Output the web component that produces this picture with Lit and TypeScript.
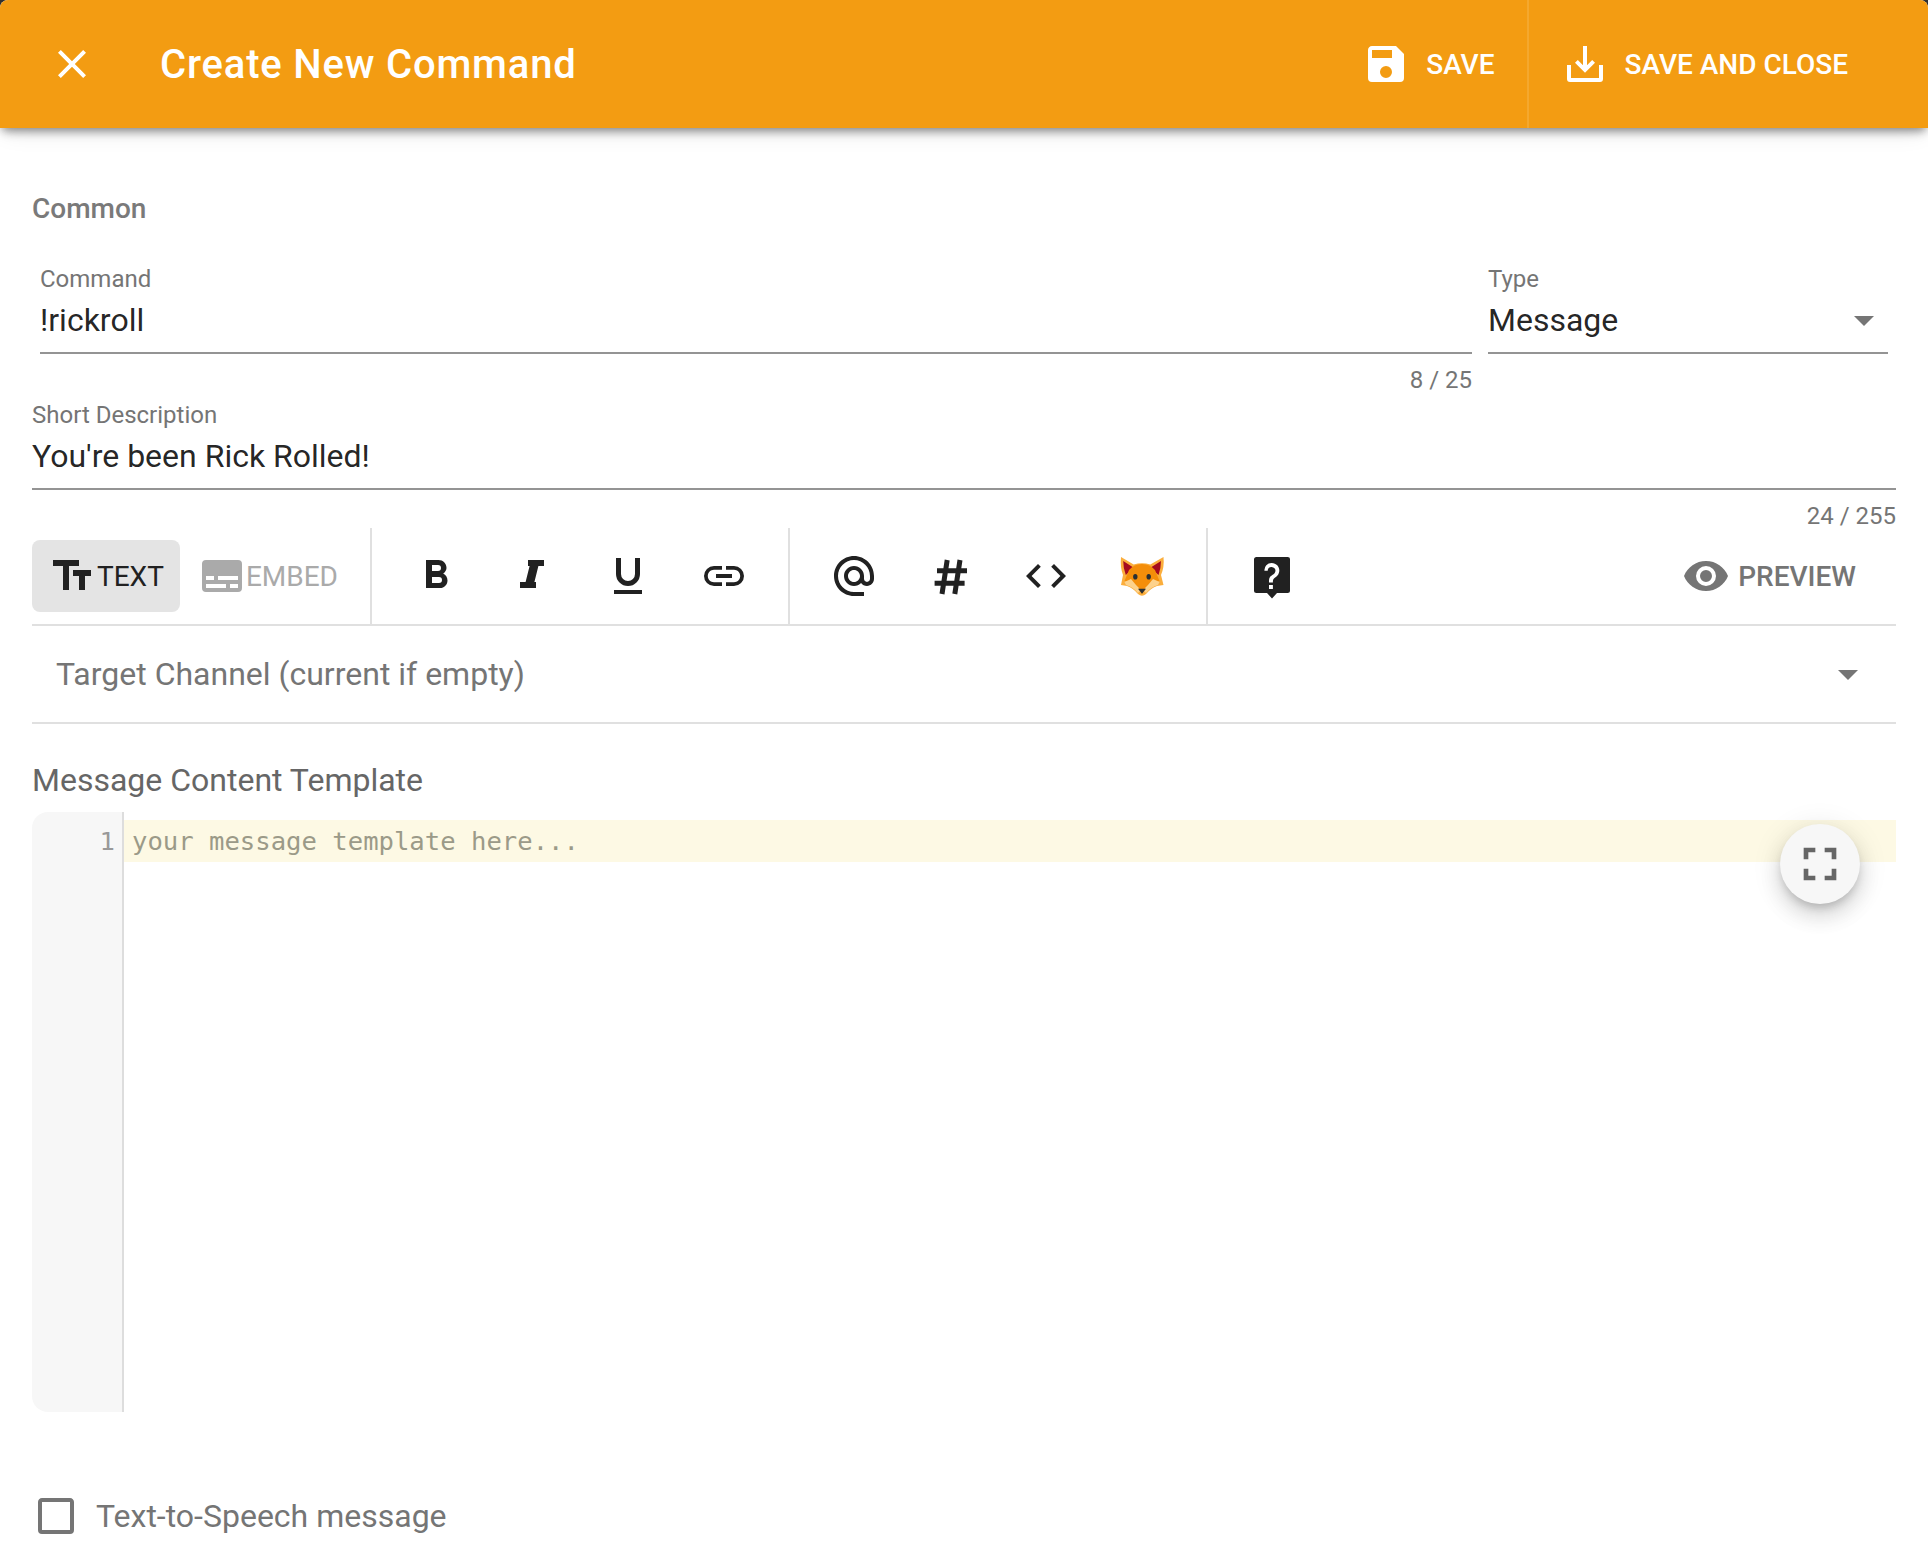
import { LitElement, html, css, svg } from "lit";
import { customElement } from "lit/decorators.js";

const icons = {
  close: "M19,6.41L17.59,5L12,10.59L6.41,5L5,6.41L10.59,12L5,17.59L6.41,19L12,13.41L17.59,19L19,17.59L13.41,12L19,6.41Z",
  save: "M15,9H5V5H15M12,19A3,3 0 0,1 9,16A3,3 0 0,1 12,13A3,3 0 0,1 15,16A3,3 0 0,1 12,19M17,3H5C3.89,3 3,3.9 3,5V19A2,2 0 0,0 5,21H19A2,2 0 0,0 21,19V7L17,3Z",
  tray: "M3 12.5H5V19H19V12.5H21V19.5A1.5 1.5 0 0 1 19.5 21H4.5A1.5 1.5 0 0 1 3 19.5ZM11 3H13V12.6L15.6 10L17 11.4L12 16.4L7 11.4L8.4 10L11 12.6Z",
  size: "M21,12H18V19H15V12H12V9H21M15,4V7H10V19H7V7H2V4H15Z",
  subtitles: "M20,4H4A2,2 0 0,0 2,6V18A2,2 0 0,0 4,20H20A2,2 0 0,0 22,18V6A2,2 0 0,0 20,4M4,12H8V14H4V12M14,18H4V16H14V18M20,18H16V16H20V18M20,14H10V12H20V14Z",
  bold: "M13.5,15.5H10V12.5H13.5A1.5,1.5 0 0,1 15,14A1.5,1.5 0 0,1 13.5,15.5M10,6.5H13A1.5,1.5 0 0,1 14.5,8A1.5,1.5 0 0,1 13,9.5H10M15.6,10.79C16.57,10.11 17.25,9 17.25,8C17.25,5.74 15.5,4 13.25,4H7V18H14.04C16.14,18 17.75,16.3 17.75,14.21C17.75,12.69 16.89,11.39 15.6,10.79Z",
  italic: "M10,4V7H10.8L8.8,15H6V18H14V15H13.2L15.2,7H18V4H10Z",
  underline: "M5,21H19V19H5V21M12,17A6,6 0 0,0 18,11V3H15.5V11A3.5,3.5 0 0,1 12,14.5A3.5,3.5 0 0,1 8.5,11V3H6V11A6,6 0 0,0 12,17Z",
  link: "M3.9,12C3.9,10.29 5.29,8.9 7,8.9H11V7H7A5,5 0 0,0 2,12A5,5 0 0,0 7,17H11V15.1H7C5.29,15.1 3.9,13.71 3.9,12M8,13H16V11H8V13M17,7H13V8.9H17C18.71,8.9 20.1,10.29 20.1,12C20.1,13.71 18.71,15.1 17,15.1H13V17H17A5,5 0 0,0 22,12A5,5 0 0,0 17,7Z",
  at: "M12 2C6.48 2 2 6.48 2 12s4.48 10 10 10h5v-2h-5c-4.34 0-8-3.66-8-8s3.66-8 8-8 8 3.66 8 8v1.43c0 .79-.71 1.57-1.5 1.57s-1.5-.78-1.5-1.57V12c0-2.76-2.24-5-5-5s-5 2.24-5 5 2.24 5 5 5c1.38 0 2.64-.56 3.54-1.47.65.89 1.77 1.47 2.96 1.47 1.97 0 3.5-1.6 3.5-3.57V12c0-5.52-4.48-10-10-10zm0 13c-1.66 0-3-1.34-3-3s1.34-3 3-3 3 1.34 3 3-1.34 3-3 3z",
  code: "M14.6,16.6L19.2,12L14.6,7.4L16,6L22,12L16,18L14.6,16.6M9.4,16.6L4.8,12L9.4,7.4L8,6L2,12L8,18L9.4,16.6Z",
  eye: "M12,9A3,3 0 0,0 9,12A3,3 0 0,0 12,15A3,3 0 0,0 15,12A3,3 0 0,0 12,9M12,17A5,5 0 0,1 7,12A5,5 0 0,1 12,7A5,5 0 0,1 17,12A5,5 0 0,1 12,17M12,4.5C7,4.5 2.73,7.61 1,12C2.73,16.39 7,19.5 12,19.5C17,19.5 21.27,16.39 23,12C21.27,7.61 17,4.5 12,4.5Z",
  menuDown: "M7,10L12,15L17,10H7Z",
  fullscreen: "M5,5H10V7H7V10H5V5M14,5H19V10H17V7H14V5M17,14H19V19H14V17H17V14M10,17V19H5V14H7V17H10Z",
  checkbox: "M19,3H5C3.89,3 3,3.89 3,5V19A2,2 0 0,0 5,21H19A2,2 0 0,0 21,19V5C21,3.89 20.1,3 19,3M19,5V19H5V5H19Z",
};

const icon = (d: string, size = 48) => html`<svg class="icon" width=${size} height=${size} viewBox="0 0 24 24"><path d=${d} fill="currentColor"></path></svg>`;

const pound = html`<svg class="icon" width="48" height="48" viewBox="0 0 24 24">
  ${svg`<path d="M10.6 4L8 21M17 4L14.4 21M5.5 9.4H20.5M4.3 15.6H19.3" fill="none" stroke="#212121" stroke-width="2.5"></path>`}
</svg>`;

// fox emoji, no colour emoji font in the sandbox
const fox = html`<svg class="icon" width="48" height="48" viewBox="0 0 48 48">
  ${svg`
    <path d="M3 5L15.7 12.5Q24 10 32.3 12.5L45.5 5Q46.5 15 43 23L45.5 33L39 34Q33 36 28 42Q24 45.5 20 42Q15 36 9 34L3 33L5 23Q2 15 3 5Z" fill="#fbae3c"></path>
    <path d="M5.2 9L15.7 15.7L7.8 23Q5.2 16 5.2 9ZM43 9L32.3 15.7L40.5 23Q43 16 43 9Z" fill="#a50b1e"></path>
    <path d="M24 12Q32 12 37 18L41.5 29L36 30Q30 32 27 38L24 42L21 38Q18 32 12 30L6.5 29L11 18Q16 12 24 12Z" fill="#f48e0a"></path>
    <path d="M6.5 30L13 27L18 33Q21 35 22 39L20 41Q15 35 8 33ZM41.5 30L35 27L30 33Q27 35 26 39L28 41Q33 35 40 33Z" fill="#fdd28c"></path>
    <ellipse cx="17.3" cy="24.7" rx="2.2" ry="2.8" fill="#292f33"></ellipse>
    <ellipse cx="30.7" cy="24.7" rx="2.2" ry="2.8" fill="#292f33"></ellipse>
    <path d="M20 36.7H28L24 41.7Z" fill="#292f33"></path>
  `}
</svg>`;

const helpIcon = html`<svg class="icon" width="48" height="48" viewBox="0 0 48 48">
  ${svg`
    <path d="M8.5 5H39.5A2.5 2.5 0 0 1 42 7.5V38.5A2.5 2.5 0 0 1 39.5 41H29L24 46.5L19 41H8.5A2.5 2.5 0 0 1 6 38.5V7.5A2.5 2.5 0 0 1 8.5 5Z" fill="#212121"></path>
    <path d="M10,19H13V22H10V19M12,2C17.35,2.22 19.68,7.62 16.5,11.67C15.67,12.67 14.33,13.33 13.67,14.17C13,15 13,16 13,17H10C10,15.33 10,13.92 10.67,12.92C11.33,11.92 12.67,11.33 13.5,10.67C15.92,8.43 15.32,5.26 12,5A3,3 0 0,0 9,8H6.5A5.5,5.5 0 0,1 12,2Z" fill="#fff" transform="translate(8 8.4) scale(1.3)"></path>
  `}
</svg>`;

@customElement("app-root")
export class AppRoot extends LitElement {
  static styles = css`
    :host {
      display: block;
      width: 1928px;
      height: 1556px;
      background: #2f2f2f;
      font-family: Roboto, sans-serif;
      overflow: hidden;
    }

    .dialog {
      height: 1556px;
      background: #fff;
      border-radius: 8px 8px 0 0;
      overflow: hidden;
    }

    .icon {
      display: block;
      flex: none;
    }

    /* Cabecalho */

    .bar {
      position: relative;
      display: flex;
      align-items: center;
      height: 128px;
      padding: 0 48px;
      background: #f39c12;
      color: #fff;
      box-shadow: 0 4px 8px -2px rgba(0, 0, 0, 0.3), 0 8px 10px -4px rgba(0, 0, 0, 0.2), 0 4px 24px -4px rgba(0, 0, 0, 0.14);
    }

    .title {
      flex: 1;
      margin-left: 64px;
      font-size: 40px;
      font-weight: 500;
      letter-spacing: 0.82px;
    }

    .bar-btn {
      display: flex;
      align-items: center;
      gap: 16px;
      height: 128px;
      padding: 0 32px;
      font-size: 28px;
      font-weight: 500;
    }

    .bar-div {
      width: 2px;
      height: 128px;
      background: rgba(255, 255, 255, 0.12);
    }

    /* Formulario */

    .form {
      padding: 0 32px;
    }

    .section {
      padding-top: 65px;
      font-size: 28px;
      line-height: 32px;
      font-weight: 500;
      color: #7a7a7a;
    }

    .row {
      display: flex;
      gap: 16px;
      margin-top: 40px;
      padding-left: 8px;
      padding-right: 8px;
    }

    .field {
      display: block;
      flex: 1;
    }

    .field.type {
      flex: none;
      width: 400px;
    }

    .label {
      font-size: 24px;
      line-height: 28px;
      color: #757575;
    }

    .value {
      display: flex;
      align-items: center;
      justify-content: space-between;
      height: 46px;
      margin-top: 4px;
      font-size: 32px;
      color: rgba(0, 0, 0, 0.87);
    }

    .line {
      height: 2px;
      margin-top: 9px;
      background: rgba(0, 0, 0, 0.42);
    }

    .hint {
      height: 28px;
      margin-top: 12px;
      font-size: 24px;
      line-height: 28px;
      text-align: right;
      color: #757575;
    }

    .short {
      margin-top: 7px;
    }

    .arrow {
      color: #757575;
    }

    /* Barra de ferramentas */

    .tools {
      display: flex;
      align-items: stretch;
      height: 96px;
      margin-top: -2px;
      border-bottom: 2px solid #e0e0e0;
    }

    .mode {
      display: flex;
      align-items: center;
      height: 72px;
      margin-top: 12px;
      padding: 0 16px;
      border-radius: 8px;
      font-size: 28px;
      color: #212121;
    }

    .mode.on {
      background: #e4e4e4;
      padding-left: 17px;
      margin-right: 2px;
    }

    .mode.off {
      padding-right: 16px;
      color: #aaa;
    }

    .sep {
      width: 2px;
      margin: 0 16px;
      background: #e0e0e0;
    }

    .tool {
      display: flex;
      align-items: center;
      padding: 0 24px;
      color: #212121;
    }

    .preview {
      display: flex;
      align-items: center;
      gap: 8px;
      margin-left: auto;
      padding-right: 40px;
      font-size: 28px;
      font-weight: 500;
      color: #757575;
    }

    /* Canal */

    .channel {
      display: flex;
      align-items: center;
      justify-content: space-between;
      height: 96px;
      padding: 0 24px;
      border-bottom: 2px solid #e0e0e0;
      font-size: 32px;
      color: #757575;
    }

    .heading {
      margin-top: 36px;
      font-size: 32px;
      line-height: 40px;
      color: #666;
    }

    /* Editor */

    .editor {
      position: relative;
      display: flex;
      height: 600px;
      margin-top: 12px;
    }

    .gutter {
      box-sizing: border-box;
      width: 92px;
      padding: 8px 7px 0 0;
      background: #f7f7f7;
      border-right: 2px solid #ddd;
      border-radius: 16px 0 0 16px;
      font-family: "DejaVu Sans Mono", monospace;
      font-size: 25.6px;
      line-height: 42px;
      text-align: right;
      color: #999;
    }

    .code {
      flex: 1;
      padding-top: 8px;
    }

    .active {
      height: 42px;
      padding-left: 8px;
      background: #fdf9e4;
      font-family: "DejaVu Sans Mono", monospace;
      font-size: 25.6px;
      line-height: 42px;
      color: #9b9a88;
    }

    .fab {
      position: absolute;
      top: 12px;
      right: 36px;
      display: flex;
      align-items: center;
      justify-content: center;
      width: 80px;
      height: 80px;
      border-radius: 50%;
      background: #f7f7f7;
      color: #666;
      box-shadow: 0 6px 10px -3px rgba(0, 0, 0, 0.2), 0 12px 20px 2px rgba(0, 0, 0, 0.1), 0 4px 28px 4px rgba(0, 0, 0, 0.08);
    }

    .tts {
      display: flex;
      align-items: center;
      gap: 16px;
      margin-top: 80px;
      font-size: 32px;
      color: #757575;
    }
  `;

  render() {
    return html`
      <div class="dialog">
        <header class="bar">
          ${icon(icons.close)}
          <div class="title">Create New Command</div>
          <div class="bar-btn">${icon(icons.save)}SAVE</div>
          <div class="bar-div"></div>
          <div class="bar-btn">${icon(icons.tray)}SAVE AND CLOSE</div>
        </header>

        <main class="form">
          <div class="section">Common</div>

          <div class="row">
            <div class="field">
              <div class="label">Command</div>
              <div class="value">!rickroll</div>
              <div class="line"></div>
              <div class="hint">8 / 25</div>
            </div>
            <div class="field type">
              <div class="label">Type</div>
              <div class="value">Message <span class="arrow">${icon(icons.menuDown)}</span></div>
              <div class="line"></div>
            </div>
          </div>

          <div class="field short">
            <div class="label">Short Description</div>
            <div class="value">You're been Rick Rolled!</div>
            <div class="line"></div>
            <div class="hint">24 / 255</div>
          </div>

          <div class="tools">
            <div class="mode on">${icon(icons.size)}TEXT</div>
            <div class="mode off">${icon(icons.subtitles)}EMBED</div>
            <div class="sep"></div>
            <div class="tool">${icon(icons.bold)}</div>
            <div class="tool">${icon(icons.italic)}</div>
            <div class="tool">${icon(icons.underline)}</div>
            <div class="tool">${icon(icons.link)}</div>
            <div class="sep"></div>
            <div class="tool">${icon(icons.at)}</div>
            <div class="tool">${pound}</div>
            <div class="tool">${icon(icons.code)}</div>
            <div class="tool">${fox}</div>
            <div class="sep"></div>
            <div class="tool">${helpIcon}</div>
            <div class="preview">${icon(icons.eye)}PREVIEW</div>
          </div>

          <div class="channel">
            Target Channel (current if empty)
            <span class="arrow">${icon(icons.menuDown)}</span>
          </div>

          <div class="heading">Message Content Template</div>

          <div class="editor">
            <div class="gutter">1</div>
            <div class="code"><div class="active">your message template here...</div></div>
            <div class="fab">${icon(icons.fullscreen, 56)}</div>
          </div>

          <label class="tts">${icon(icons.checkbox)}Text-to-Speech message</label>
        </main>
      </div>
    `;
  }
}
